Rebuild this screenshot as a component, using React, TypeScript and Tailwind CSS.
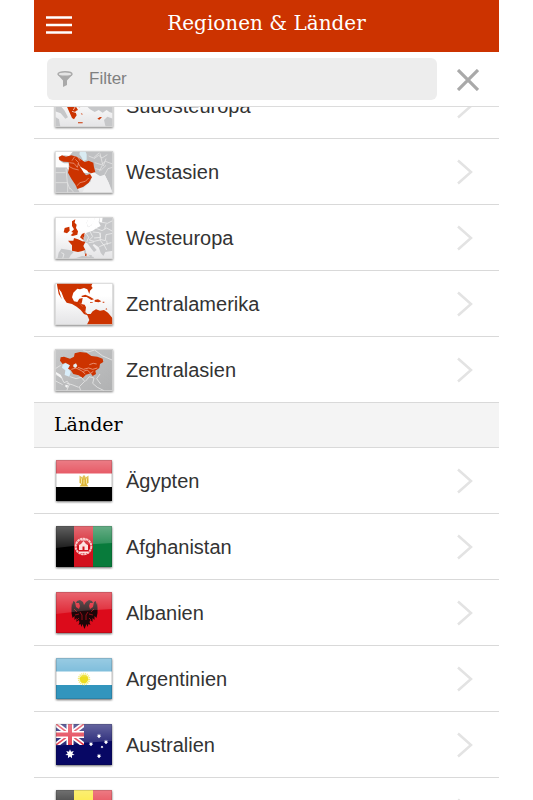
import { useLayoutEffect, useRef, useState } from "react";
import type { ReactNode } from "react";

interface Entry {
  name: string;
  icon: ReactNode;
}

const RED = "#cc3300";
const LAND = "#c6c7c9";

const MapFrame = ({ sea, children }: { sea?: string; children: ReactNode }) => (
  <svg
    viewBox="15 17 174 126"
    className="h-[42px] w-[58px] shrink-0 drop-shadow-[0_1px_1px_rgba(0,0,0,0.5)]"
    aria-hidden="true"
  >
    <defs>
      <linearGradient id="sea" x1="0" y1="0" x2="0" y2="1">
        <stop offset="0.3" stopColor="#ffffff" />
        <stop offset="1" stopColor="#e4e4e6" />
      </linearGradient>
      <linearGradient id="steppe" x1="0" y1="0" x2="1" y2="1">
        <stop offset="0" stopColor="#c6c7c8" />
        <stop offset="1" stopColor="#b0b1b2" />
      </linearGradient>
    </defs>
    <rect x="15" y="17" width="174" height="126" fill={sea ?? "url(#sea)"} />
    {children}
    <rect x="16.500" y="18.500" width="171" height="123" fill="none" stroke="#d6d6d6" strokeOpacity="0.8" strokeWidth="3" />
  </svg>
);

const FlagFrame = ({ children }: { children: ReactNode }) => (
  <svg
    viewBox="0 0 58 42"
    className="h-[42px] w-[58px] shrink-0 drop-shadow-[0_1px_1px_rgba(0,0,0,0.6)]"
    aria-hidden="true"
  >
    <defs>
      <linearGradient id="gloss" x1="0" y1="0" x2="0" y2="1">
        <stop offset="0" stopColor="#fff" stopOpacity="0.38" />
        <stop offset="1" stopColor="#fff" stopOpacity="0.12" />
      </linearGradient>
    </defs>
    {children}
    <path d="M1 0h56v17q-28 1 -56 5z" fill="url(#gloss)" />
    <rect x="1.500" y="0.500" width="55" height="40" fill="none" stroke="#000" strokeOpacity="0.12" />
  </svg>
);

const SoutheastEurope = () => (
  <MapFrame>
    <path d="M15 17H189V102L178 98L170 92L158 100L146 92L134 98L120 90L112 82L100 76L106 64L84 56L70 76L60 66L30 60L15 70z" fill={LAND} />
    <path d="M15 84l17-4 12 14 10 20-8 4-14-16-17-6zM15 112l12 8 4 23H15zM162 122l10-10 17 6v25h-22z" fill={LAND} />
    <path d="M46 40L88 44L100 74L90 84L78 82L84 92L76 96L80 108L72 120L66 116L58 98L50 80L42 62z" fill={RED} />
    <path d="M142 118l8-5 6 1-8 7zM84 129h14v3H84zM92 104l4-2 2 4zM58 122l4 2" fill={RED} />
    <path d="M62 60l10 18 16 2M56 76l18 4M70 92l6-10M66 96l12 4" stroke="#fff" strokeWidth="2" fill="none" />
  </MapFrame>
);

const WestAsia = () => (
  <MapFrame>
    <path d="M70 17H189V143L176 112L164 88L152 94L140 86L128 78L120 88L124 106L100 126L82 130L66 108L58 82L44 70L15 66V143H88L70 100L60 70L34 52L26 34L44 30L58 32z" fill="#bfc0c2" />
    <path d="M118 92L136 90L152 92L164 88L176 112L186 143H96L104 128L124 110z" fill="#f0f0f1" />
    <path d="M15 66H50L62 88L80 126L90 143H15z" fill="#c2c3c5" />
    <path d="M15 30L26 34L30 48L42 54L56 54V66L15 66z" fill="#fcfcfc" />
    <path d="M90 17l16 0 4 10 0 16-10 4-6-12-6-8z" fill="#d9ebf2" />
    <path d="M26 36L36 30L48 34L64 30L80 34L92 42L104 50L116 46L130 52L132 66L136 80L124 84L110 78L100 70L94 66L100 80L108 90L120 86L126 96L116 112L100 124L82 131L76 118L64 100L54 82L58 62L56 50L40 49L28 44z" fill={RED} />
    <path d="M15 82h31M15 112h38v30M48 70l4 42M52 112l8 20M60 128l12 14M132 40l14-10 10 8 16-10M134 52l20 6 12-10 22 8M150 24l8 34-10 20M136 70l18 4 14-14M116 32l14 6 18-16M168 40l-8 22M164 88l10-18 14-4" stroke="#e6e6e6" strokeWidth="2.200" fill="none" />
    <path d="M58 52l14 2 10 12 4-14-10-10M58 64l12 6 16 4M84 54l10 14M80 122l10-10 16-4 10-10M66 46l8-12M84 36l6 10" stroke="#f3b39f" strokeWidth="1.800" fill="none" />
    <path d="M90 64l12 18 14 2-4-8-10-6z" fill="#fff" />
  </MapFrame>
);

const WestEurope = () => (
  <MapFrame>
    <path d="M102 17H118L110 34L114 48L124 42L130 30L136 17L150 17L146 32L152 44L140 50L128 58L110 64L96 78L102 92L112 96L124 112L132 122L140 116L128 102L132 98L146 108L152 124L160 134L166 122L189 118V17z" fill={LAND} />
    <path d="M116 17h20l-6 18-8 8-8 4-4-12zM150 17l8 0-2 16-8 0z" fill="#fff" />
    <path d="M34 112L58 116L72 121L62 132L56 143H22L26 124zM70 143l26-9 34 2 4 7zM114 130l12 2-2 6zM102 118l6-2v10l-5 2z" fill={LAND} />
    <path d="M66 30L76 24L74 34L80 40L78 50L84 60L82 70L68 74L62 72L70 64L64 62L72 54L66 44zM44 50l14-4 1 12-8 8-10-3zM54 88L70 88L72 80L84 84L94 88L106 92L100 104L106 116L94 120L84 122L66 118L66 102zM90 78l6-10 8-4-2 12-2 10zM106 126l4 1-1 8-4-2z" fill={RED} />
    <path d="M108 66l8 12-6 14M120 60l8 16-10 10 14 4M128 62l20 2 4 14-20 2M136 50l20 8 14-8 18 10M152 64l-2 20 16 4 2-18 20-4M132 90l18-4 10 14 24-6M148 106l14-6 8 16M152 32l20 4 16-8M168 38l-4 14M116 94l16-2M34 124l8 4-4 14M170 88l2 12" stroke="#f4f4f4" strokeWidth="2" fill="none" />
    <path d="M88 82l10 8M98 76l4 6" stroke="#fff" strokeWidth="1.200" fill="none" />
  </MapFrame>
);

const CentralAmerica = () => (
  <MapFrame>
    <path d="M20 17H128L124 26L128 32L120 40L118 50L112 36L102 32L90 36L82 34L70 46L66 60L72 72L82 74L88 64L98 62L96 74L94 80L104 82L108 90L106 104L112 110L122 110L128 102L138 96L150 100L162 98L174 106L189 124V143H110L118 128L112 114L102 110L92 98L80 88L66 80L50 76L42 64L34 44L26 34L32 56L36 66L26 50z" fill={RED} />
    <path d="M94 56l12-4 14 6 12 8-8 2-14-9-14 0zM134 68l10-2 10 6-8 3-12-2zM120 74h8v2h-8zM158 73h5v3h-5zM130 50l3 4M166 78l3 8M168 92l4 4-5 1" fill={RED} />
    <path d="M88 76l10 12M104 102l6 10" stroke="#f1a58d" strokeWidth="1" fill="none" />
  </MapFrame>
);

const CentralAsia = () => (
  <MapFrame sea="url(#steppe)">
    <path d="M38 64l12-6 10 8-4 10 6 10-4 14-14-5 2-14-10-8z" fill="#d9eefa" />
    <path d="M30 52L32 42L42 40L60 46L72 40L74 30L90 26L110 28L124 38L142 40L158 46L160 56L150 62L148 74L136 82L138 92L128 98L122 90L108 94L98 104L86 96L70 92L62 80L54 76L60 66L46 58L38 62z" fill={RED} />
    <path d="M70 64l8-4 4 8-6 6-6-4z" fill="#e4f0f5" />
    <path d="M64 78l14-4 16 8 12 10M84 72l16 6 16-4 12 4 14-4M118 64l12-4 10 2M100 84l12-4 10 10 8-6" stroke="#f6bda9" strokeWidth="2" fill="none" />
    <path d="M15 92l19 10 8 16 10-4 6 10-8 18M15 112l23 12M60 100l18 6 16-4 10 12-16 16 4 12M106 114l12-14 14 4-4 16 14 12 20 10M150 92l-10 14 12 16M100 22l14 4 20-6 24 18 28 12M50 120l16 4 20 8M32 66l-16 10" stroke="#e8e8e8" strokeWidth="2.400" fill="none" />
    <path d="M46 124l8 2-2 8-6-4zM18 86l14 8 6 12-8-4-12-10z" fill="#f5f5f5" />
  </MapFrame>
);

const Egypt = () => (
  <FlagFrame>
    <path d="M1 0h56v14H1z" fill="#e02d3c" />
    <path d="M1 13.500h56v14H1z" fill="#fff" />
    <path d="M1 27h56v14H1z" fill="#000" />
    <path d="M24.500 15.500l3 2 .5-2h2l.5 2 3-2v7.500l-2 1 2 2.500h-9l2-2.500-2-1z" fill="#dcb535" />
    <path d="M26.500 18.500v5M31.500 18.500v5M29 19.500v5" stroke="#fff3bd" strokeWidth="0.800" />
  </FlagFrame>
);

const Afghanistan = () => (
  <FlagFrame>
    <path d="M1 0h19v41H1z" fill="#000" />
    <path d="M19 0h20v41H19z" fill="#d2101d" />
    <path d="M38 0h19v41H38z" fill="#087b3b" />
    <circle cx="28.500" cy="20.500" r="7.800" fill="none" stroke="#f9c4c4" strokeWidth="2" strokeDasharray="2.500 0.500" />
    <path d="M24 24v-5l2-1 2.500-3 2.500 3 2 1v5zM24 25.500h9v1.500h-9z" fill="#fde0e0" />
    <path d="M27.500 24v-3.500h2V24z" fill="#d2101d" />
    <path d="M26 14h5" stroke="#fbd3d3" />
  </FlagFrame>
);

const Albania = () => (
  <FlagFrame>
    <path d="M1 0h56v41H1z" fill="#dc0b1b" />
    <path
      d="M29 13l-1-3-3-2-3 1-1 2 3 0 1 3-1 3-3-2-1-5-2-1 0 4-1-3-0.500 6 0 5 1 5 2-2 0 4 2-2 0 4 2-2 1 2-1 3 2-1 1 3 1-3 2 5 2-5 1 3 1-3 2 1-1-3 1-2 2 2 0-4 2 2 0-4 2 2 1-5 0-5-.5-6-1 3 0-4-2 1-1 5-3 2-1-3 1-3 3 0-1-2-3-1-3 2z"
      fill="#1c0608"
    />
    <path d="M19 17l3 3M39 17l-3 3M20 23l4-1M38 23l-4-1M25 20l2 3v5M33 20l-2 3v5M22 28l2-2M36 28l-2-2" stroke="#a30f1a" strokeWidth="0.900" fill="none" />
  </FlagFrame>
);

const Argentina = () => (
  <FlagFrame>
    <path d="M1 0h56v14H1z" fill="#5bacd2" />
    <path d="M1 13.500h56v14H1z" fill="#fff" />
    <path d="M1 27h56v14H1z" fill="#3295bd" />
    <circle cx="29" cy="21" r="5" fill="none" stroke="#f4ec70" strokeWidth="2.500" strokeDasharray="1 0.700" />
    <circle cx="29" cy="21" r="4.200" fill="#ecdd20" />
  </FlagFrame>
);

const Star = ({ x, y, r }: { x: number; y: number; r: number }) => (
  <path
    transform={`translate(${x} ${y}) scale(${r})`}
    d="M0-1L.22-.46.78-.62.48-.11.97.22.4.28.43.9 0 .5-.43.9-.4.28-.97.22-.48-.11-.78-.62-.22-.46z"
    fill="#fff"
  />
);

const Australia = () => (
  <FlagFrame>
    <path d="M1 0h56v41H1z" fill="#070764" />
    <svg x="1" y="0" width="28" height="21" viewBox="0 0 28 21">
      <path d="M0 0L28 21M28 0L0 21" stroke="#fff" strokeWidth="5" />
      <path d="M0 0L28 21M28 0L0 21" stroke="#e0283c" strokeWidth="1.600" />
      <path d="M14 0v21M0 10.500h28" stroke="#fff" strokeWidth="7" />
      <path d="M14 0v21M0 10.500h28" stroke="#e0283c" strokeWidth="4" />
    </svg>
    <Star x={15} y={30} r={4.8} />
    <Star x={44} y={12} r={2.4} />
    <Star x={36} y={20} r={2.4} />
    <Star x={51} y={18} r={2.4} />
    <Star x={47} y={23} r={1.5} />
    <Star x={44} y={32} r={2.4} />
  </FlagFrame>
);

const Belgium = () => (
  <FlagFrame>
    <path d="M1 0h19v41H1z" fill="#1a1a1a" />
    <path d="M19 0h20v41H19z" fill="#fbe51f" />
    <path d="M38 0h19v41H38z" fill="#e32a38" />
  </FlagFrame>
);

const regions: Entry[] = [
  { name: "Südosteuropa", icon: <SoutheastEurope /> },
  { name: "Westasien", icon: <WestAsia /> },
  { name: "Westeuropa", icon: <WestEurope /> },
  { name: "Zentralamerika", icon: <CentralAmerica /> },
  { name: "Zentralasien", icon: <CentralAsia /> },
];

const countries: Entry[] = [
  { name: "Ägypten", icon: <Egypt /> },
  { name: "Afghanistan", icon: <Afghanistan /> },
  { name: "Albanien", icon: <Albania /> },
  { name: "Argentinien", icon: <Argentina /> },
  { name: "Australien", icon: <Australia /> },
  { name: "Belgien", icon: <Belgium /> },
];

const EntryList = ({ entries }: { entries: Entry[] }) => (
  <ul>
    {entries.map((entry) => (
      <li key={entry.name} className="border-b border-[#d9d9d9]">
        <a href="#" className="flex h-[65px] items-center pr-[26px] pl-[21px]">
          {entry.icon}
          <span className="ml-[13px] flex-1 text-[20px] leading-6 text-[#333]">{entry.name}</span>
          <svg viewBox="0 0 16 26" className="h-[26px] w-4" fill="none" stroke="#e3e3e3" strokeWidth="2.500" aria-hidden="true">
            <path d="M1 1.500l13 11.500L1 24.500" />
          </svg>
        </a>
      </li>
    ))}
  </ul>
);

const App = () => {
  const [filter, setFilter] = useState<string>("");
  const listRef = useRef<HTMLElement>(null);

  useLayoutEffect(() => {
    if (listRef.current) {
      listRef.current.scrollTop = 34;
    }
  }, []);

  const matches = (entry: Entry) =>
    entry.name.toLowerCase().includes(filter.toLowerCase());

  return (
    <div className="h-screen bg-white px-[34px] font-['Liberation_Sans',Arial,sans-serif]">
      <div className="flex h-full flex-col">
        <header className="flex h-[52px] shrink-0 items-center bg-[#cc3300] px-3 pb-[2px]">
          <button type="button" aria-label="Menü" className="cursor-pointer">
            <svg viewBox="0 0 26 18" className="h-[18px] w-[26px]" stroke="#fff" strokeWidth="2.500">
              <path d="M0 1.500h26M0 9h26M0 16.500h26" />
            </svg>
          </button>
          <h1 className="flex-1 pr-[26px] pb-1 text-center font-['DejaVu_Serif',serif] text-[20px] leading-6 text-white">
            Regionen &amp; Länder
          </h1>
        </header>

        <div className="flex shrink-0 items-center border-b border-[#dcdcdc] py-[6px] pr-5 pl-[13px]">
          <label className="flex h-[42px] min-w-0 flex-1 items-center rounded-md bg-[#ededed] pl-[10px]">
            <svg viewBox="0 0 16 16" className="h-4 w-4 shrink-0" aria-hidden="true">
              <path d="M0.500 3.500L6 9.500V16L10 14V9.500L15.500 3.500z" fill="#a9a9a9" />
              <ellipse cx="8" cy="3" rx="7" ry="2.300" fill="#e4e4e4" stroke="#a9a9a9" strokeWidth="1.400" />
            </svg>
            <input
              type="text"
              aria-label="Filter"
              placeholder="Filter"
              value={filter}
              onChange={(e) => setFilter(e.target.value)}
              className="ml-4 min-w-0 flex-1 bg-transparent text-[17px] leading-6 text-[#333] outline-none placeholder:text-[#808080]"
            />
          </label>
          <button
            type="button"
            aria-label="Filter löschen"
            className="ml-5 cursor-pointer pt-[2px]"
            onClick={() => setFilter("")}
          >
            <svg viewBox="0 0 22 22" className="h-[22px] w-[22px]" stroke="#a9a9a9" strokeWidth="3.200">
              <path d="M1 1l20 20M21 1L1 21" />
            </svg>
          </button>
        </div>

        <main ref={listRef} className="min-h-0 flex-1 overflow-y-auto [scrollbar-width:none]">
          <EntryList entries={regions.filter(matches)} />
          <h2 className="border-b border-[#d9d9d9] bg-[#f4f4f4] px-5 pt-[9px] pb-[11px] font-['DejaVu_Serif',serif] text-[19px] leading-6 text-black">
            Länder
          </h2>
          <EntryList entries={countries.filter(matches)} />
        </main>
      </div>
    </div>
  );
};

export default App;
